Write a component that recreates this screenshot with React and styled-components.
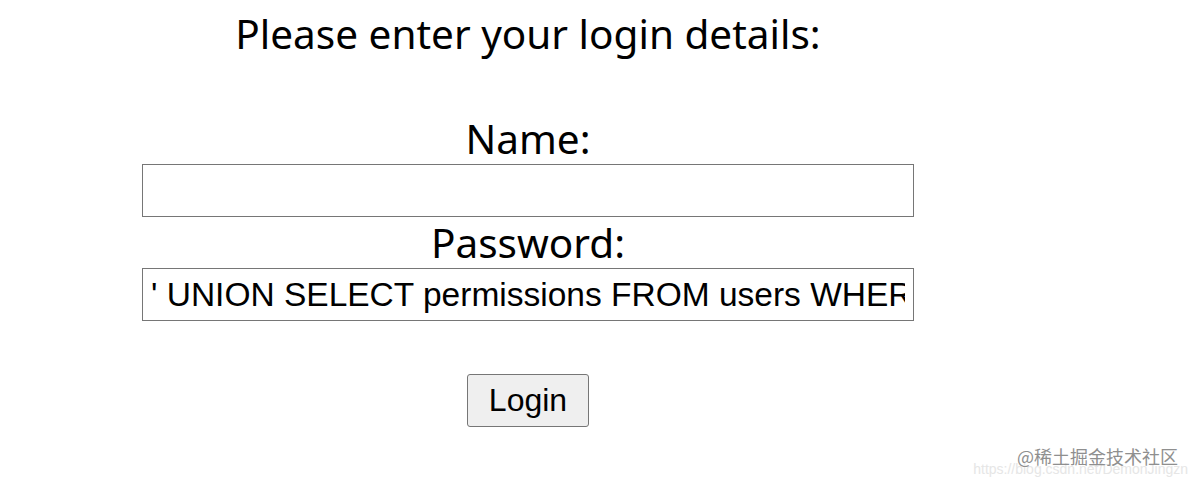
import React from 'react';
import styled, { createGlobalStyle } from 'styled-components';

const GlobalStyle = createGlobalStyle`
  html, body {
    margin: 0;
    background: #fff;
  }
`;

const Page = styled.main`
  position: relative;
  width: 1194px;
  height: 487px;
  overflow: hidden;
`;

const Form = styled.form`
  width: 772px;
  margin-left: 142px;
  display: flex;
  flex-direction: column;
  align-items: center;
`;

const Heading = styled.h2`
  margin: 10px 0 55px;
  font-family: "Noto Sans", sans-serif;
  font-weight: 400;
  font-size: 40.5px;
  line-height: 48px;
  color: #000;
  white-space: nowrap;
`;

const Label = styled.label`
  margin-top: 2px;
  font-family: "Noto Sans", sans-serif;
  font-size: 40.5px;
  line-height: 48px;
  color: #000;
`;

const Input = styled.input`
  box-sizing: border-box;
  width: 100%;
  height: 53px;
  margin-top: 1px;
  padding: 0 8px;
  border: 1px solid #767676;
  border-radius: 0;
  background: #fff;
  font-family: "Liberation Sans", Arial, sans-serif;
  font-size: 33.5px;
  color: #000;
  outline: none;
`;

const Button = styled.button`
  box-sizing: border-box;
  width: 122px;
  height: 53px;
  margin-top: 53px;
  padding: 0;
  border: 1px solid #767676;
  border-radius: 3px;
  background: #efefef;
  font-family: "Liberation Sans", Arial, sans-serif;
  font-size: 32px;
  color: #000;
`;

const Watermark = styled.div`
  position: absolute;
  right: 6px;
  bottom: 10px;
  display: grid;
  justify-items: end;
`;

const WatermarkUrl = styled.span`
  grid-area: 1 / 1;
  margin-top: 17px;
  font-family: "Liberation Sans", Arial, sans-serif;
  font-size: 14px;
  color: #e6e6e6;
  white-space: nowrap;
`;

const WatermarkBrand = styled.span`
  grid-area: 1 / 1;
  margin-right: 10px;
  font-family: "Noto Sans CJK SC", "Noto Sans", sans-serif;
  font-size: 18px;
  line-height: 24px;
  color: #8f8f8f;
  white-space: nowrap;
`;

export default function App() {
  const injection = "' UNION SELECT permissions FROM users WHERE username = 'admin' --";

  const handleSubmit = event => {
    event.preventDefault();
  };

  return (
    <Page>
      <GlobalStyle />
      <Form onSubmit={handleSubmit} autoComplete="off">
        <Heading>Please enter your login details:</Heading>
        <Label htmlFor="name">Name:</Label>
        <Input id="name" type="text" defaultValue="" />
        <Label htmlFor="password">Password:</Label>
        <Input id="password" type="text" defaultValue={injection} />
        <Button type="submit">Login</Button>
      </Form>
      <Watermark>
        <WatermarkUrl>https://blog.csdn.net/DemonJingzn</WatermarkUrl>
        <WatermarkBrand>@稀土掘金技术社区</WatermarkBrand>
      </Watermark>
    </Page>
  );
}
